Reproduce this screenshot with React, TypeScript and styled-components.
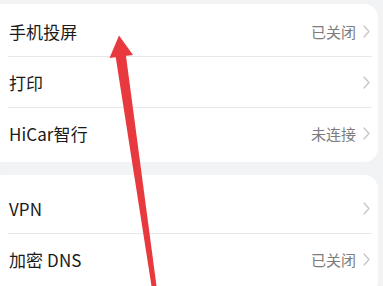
import styled, { createGlobalStyle } from 'styled-components';

const GlobalStyle = createGlobalStyle`
  html, body {
    margin: 0;
    padding: 0;
    background: #f1f3f5;
  }
  body {
    font-family: "Noto Sans CJK SC", "Noto Sans", sans-serif;
  }
`;

const Screen = styled.div`
  position: relative;
  width: 383px;
  height: 286px;
  overflow: hidden;
  background: #f1f3f5;
  padding-top: 4px;
  box-sizing: border-box;
`;

const Card = styled.div<{ $padTop: number; $padBottom: number }>`
  margin-left: -12px;
  width: 390px;
  background: #ffffff;
  border-radius: 14px;
  padding-top: ${(p) => p.$padTop}px;
  padding-bottom: ${(p) => p.$padBottom}px;
  margin-bottom: 13px;
`;

const Row = styled.div<{ $last?: boolean }>`
  display: flex;
  align-items: center;
  height: 51px;
  margin-left: 20px;
  margin-right: 6px;
  padding: 0 2px 0 1px;
  box-sizing: border-box;
  border-bottom: 1px solid ${(p) => (p.$last ? 'transparent' : '#e8e8e8')};
`;

const Title = styled.span`
  flex: 1;
  font-size: 17px;
  color: #1a1a1a;
  letter-spacing: 0.1px;
`;

const Status = styled.span`
  font-size: 15px;
  color: #7c7c7c;
  margin-right: 7px;
`;

const Chevron = () => (
  <svg width="7" height="13" viewBox="0 0 7 13">
    <polyline points="1,1 6,6.5 1,12" fill="none" stroke="#c6c6c6" strokeWidth="1.3" strokeLinecap="round" strokeLinejoin="round" />
  </svg>
);

const ArrowLayer = styled.svg`
  position: absolute;
  left: 0;
  top: 0;
  pointer-events: none;
`;

type Item = { title: string; status?: string };

const group1: Item[] = [
  { title: '手机投屏', status: '已关闭' },
  { title: '打印' },
  { title: 'HiCar智行', status: '未连接' },
];

const group2: Item[] = [
  { title: 'VPN' },
  { title: '加密 DNS', status: '已关闭' },
];

const renderRows = (items: Item[]) =>
  items.map((it, i) => (
    <Row key={it.title} $last={i === items.length - 1}>
      <Title>{it.title}</Title>
      {it.status && <Status>{it.status}</Status>}
      <Chevron />
    </Row>
  ));

export default function App() {
  return (
    <>
      <GlobalStyle />
      <Screen>
        <Card $padTop={2} $padBottom={3}>
          {renderRows(group1)}
        </Card>
        <Card $padTop={8} $padBottom={10}>
          {renderRows(group2)}
        </Card>
        <ArrowLayer width="383" height="286" viewBox="0 0 383 286">
          <polygon points="115.5,56 126,56 156.5,286 151.5,286" fill="#e83a3e" />
          <polygon points="119,35.5 133,55 109.5,58" fill="#e83a3e" />
        </ArrowLayer>
      </Screen>
    </>
  );
}
